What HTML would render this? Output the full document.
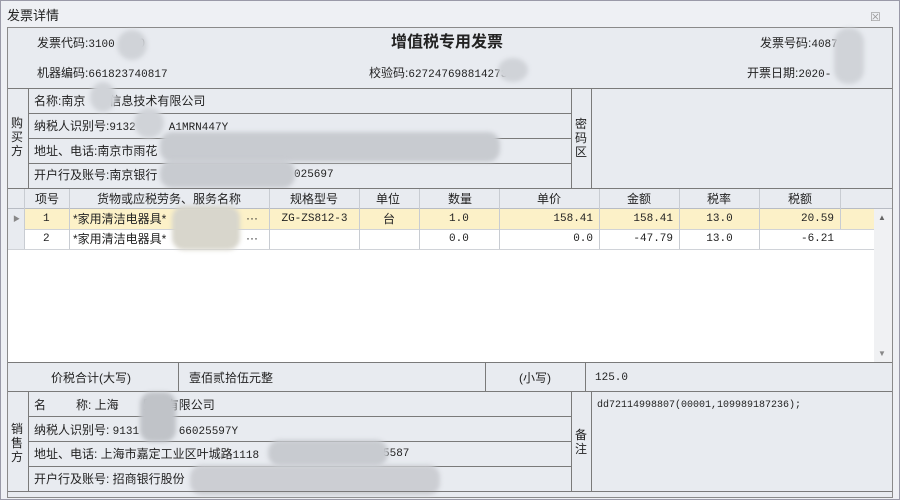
<!DOCTYPE html>
<html><head><meta charset="utf-8"><style>
*{margin:0;padding:0;box-sizing:border-box}
body{width:900px;height:500px;background:#eef0f4;font-family:"Liberation Sans","Noto Sans CJK SC","WenQuanYi Zen Hei",sans-serif;font-size:12px;color:#222;position:relative;overflow:hidden}
.a{position:absolute}
.t{position:absolute;white-space:nowrap;font-size:12px;line-height:14px}
.m{font-family:"Liberation Mono","Noto Sans CJK SC",monospace;font-size:11px}
.r{text-align:right}
.c{text-align:center}
.hl{position:absolute;height:1px;background:#7a7a7a}
.vl{position:absolute;width:1px;background:#7a7a7a}
.g{position:absolute;background:#d0d3d8;border-radius:12px;filter:blur(2px)}
</style></head><body>
<div class="a" style="left:0;top:0;width:900px;height:500px;border:1px solid #9a9aa8"></div>
<div class="t" style="left:7px;top:9px;font-size:13px">发票详情</div>
<div class="t" style="left:870px;top:10px;color:#999">☒</div>
<div class="a" style="left:7px;top:27px;width:886px;height:471px;background:#e8ebf0;border:1px solid #8a8a8a"></div>
<!-- header -->
<div class="t" style="left:37px;top:36px">发票代码:<span class="m">3100</span><span style="color:#888">&nbsp;&nbsp;&nbsp;&nbsp;&nbsp;&nbsp;&nbsp;</span>0</div>
<div class="g" style="left:117px;top:30px;width:30px;height:30px;border-radius:50%"></div>
<div class="t" style="left:391px;top:34px;font-size:16px;font-weight:bold;line-height:18px">增值税专用发票</div>
<div class="t" style="left:760px;top:36px">发票号码:<span class="m">4087</span></div>
<div class="g" style="left:834px;top:28px;width:30px;height:56px;border-radius:14px"></div>
<div class="t" style="left:37px;top:66px">机器编码:<span class="m">661823740817</span></div>
<div class="t" style="left:369px;top:66px">校验码:<span class="m">627247698814273</span></div>
<div class="g" style="left:498px;top:58px;width:30px;height:24px;border-radius:50%"></div>
<div class="t" style="left:747px;top:66px">开票日期:<span class="m">2020-</span></div>
<!-- buyer -->
<div class="hl" style="left:8px;top:88px;width:884px"></div>
<div class="vl" style="left:28px;top:88px;height:100px"></div>
<div class="t" style="left:11px;top:116px;line-height:14px;width:12px;white-space:normal">购买方</div>
<div class="hl" style="left:29px;top:113px;width:542px"></div>
<div class="hl" style="left:29px;top:138px;width:542px"></div>
<div class="hl" style="left:29px;top:163px;width:542px"></div>
<div class="vl" style="left:571px;top:88px;height:100px"></div>
<div class="vl" style="left:591px;top:88px;height:100px"></div>
<div class="t" style="left:575px;top:117px;width:12px;white-space:normal">密码区</div>
<div class="t" style="left:34px;top:94px">名称:南京<span style="color:transparent">xxxx</span>信息技术有限公司</div>
<div class="t" style="left:34px;top:119px">纳税人识别号:<span class="m">9132<span style="color:transparent">xxxxx</span>A1MRN447Y</span></div>
<div class="t" style="left:34px;top:144px">地址、电话:南京市雨花</div>
<div class="t" style="left:34px;top:168px">开户行及账号:南京银行</div>
<div class="t m" style="left:294px;top:168px">025697</div>
<div class="g" style="left:90px;top:82px;width:26px;height:30px;border-radius:50%"></div>
<div class="g" style="left:134px;top:108px;width:30px;height:30px;border-radius:50%"></div>
<div class="g" style="left:160px;top:132px;width:340px;height:30px;background:#c8cbd0"></div>
<div class="g" style="left:160px;top:160px;width:135px;height:28px;background:#c8cbd0"></div>
<!-- table -->
<div class="a" style="left:8px;top:188px;width:884px;height:174px;background:#fff;border-top:1px solid #7a7a7a"></div>
<div class="a" style="left:8px;top:189px;width:884px;height:20px;background:#e8ebf0;border-bottom:1px solid #b8bcc4"></div>
<div class="a" style="left:8px;top:209px;width:17px;height:40px;background:#e8ebf0"></div>
<div class="a" style="left:25px;top:209px;width:849px;height:20px;background:#fcf1c8"></div>
<div class="hl" style="left:25px;top:229px;width:849px;background:#d0d3d8"></div>
<div class="hl" style="left:8px;top:249px;width:866px;background:#d0d3d8"></div>
<div class="a" style="left:874px;top:209px;width:18px;height:153px;background:#f0f1f3"></div>
<div class="t" style="left:878px;top:211px;font-size:8px;color:#666">▲</div>
<div class="t" style="left:878px;top:347px;font-size:8px;color:#888">▼</div>
<div class="vl" style="left:24px;top:189px;height:60px;background:#c8ccd2"></div>
<div class="vl" style="left:69px;top:189px;height:60px;background:#c8ccd2"></div>
<div class="vl" style="left:269px;top:189px;height:60px;background:#c8ccd2"></div>
<div class="vl" style="left:359px;top:189px;height:60px;background:#c8ccd2"></div>
<div class="vl" style="left:419px;top:189px;height:60px;background:#c8ccd2"></div>
<div class="vl" style="left:499px;top:189px;height:60px;background:#c8ccd2"></div>
<div class="vl" style="left:599px;top:189px;height:60px;background:#c8ccd2"></div>
<div class="vl" style="left:679px;top:189px;height:60px;background:#c8ccd2"></div>
<div class="vl" style="left:759px;top:189px;height:60px;background:#c8ccd2"></div>
<div class="vl" style="left:840px;top:189px;height:40px;background:#c8ccd2"></div>
<div class="t" style="left:35px;top:192px">项号</div>
<div class="t" style="left:97px;top:192px">货物或应税劳务、服务名称</div>
<div class="t" style="left:290px;top:192px">规格型号</div>
<div class="t" style="left:376px;top:192px">单位</div>
<div class="t" style="left:448px;top:192px">数量</div>
<div class="t" style="left:537px;top:192px">单价</div>
<div class="t" style="left:627px;top:192px">金额</div>
<div class="t" style="left:707px;top:192px">税率</div>
<div class="t" style="left:788px;top:192px">税额</div>
<div class="t" style="left:13px;top:213px;font-size:7px;color:#888">▶</div>
<div class="t m" style="left:43px;top:212px">1</div>
<div class="t" style="left:73px;top:212px">*家用清洁电器具*</div>
<div class="t" style="left:246px;top:211px">···</div>
<div class="t m c" style="left:270px;top:212px;width:89px">ZG-ZS812-3</div>
<div class="t" style="left:383px;top:212px">台</div>
<div class="t m" style="left:449px;top:212px">1.0</div>
<div class="t m r" style="left:500px;top:212px;width:93px">158.41</div>
<div class="t m r" style="left:600px;top:212px;width:73px">158.41</div>
<div class="t m c" style="left:680px;top:212px;width:79px">13.0</div>
<div class="t m r" style="left:760px;top:212px;width:74px">20.59</div>
<div class="t m" style="left:43px;top:232px">2</div>
<div class="t" style="left:73px;top:232px">*家用清洁电器具*</div>
<div class="t" style="left:246px;top:231px">···</div>
<div class="t m" style="left:449px;top:232px">0.0</div>
<div class="t m r" style="left:500px;top:232px;width:93px">0.0</div>
<div class="t m r" style="left:600px;top:232px;width:73px">-47.79</div>
<div class="t m c" style="left:680px;top:232px;width:79px">13.0</div>
<div class="t m r" style="left:760px;top:232px;width:74px">-6.21</div>
<div class="g" style="left:172px;top:206px;width:68px;height:44px;background:#d8d6cc"></div>
<!-- total -->
<div class="hl" style="left:8px;top:362px;width:884px"></div>
<div class="hl" style="left:8px;top:391px;width:884px"></div>
<div class="vl" style="left:178px;top:362px;height:29px"></div>
<div class="vl" style="left:485px;top:362px;height:29px"></div>
<div class="vl" style="left:585px;top:362px;height:29px"></div>
<div class="t" style="left:51px;top:371px">价税合计(大写)</div>
<div class="t" style="left:189px;top:371px">壹佰贰拾伍元整</div>
<div class="t" style="left:519px;top:371px">(小写)</div>
<div class="t m" style="left:595px;top:371px">125.0</div>
<!-- seller -->
<div class="vl" style="left:28px;top:391px;height:100px"></div>
<div class="t" style="left:11px;top:422px;width:12px;white-space:normal">销售方</div>
<div class="hl" style="left:29px;top:416px;width:542px"></div>
<div class="hl" style="left:29px;top:441px;width:542px"></div>
<div class="hl" style="left:29px;top:466px;width:542px"></div>
<div class="vl" style="left:571px;top:391px;height:100px"></div>
<div class="vl" style="left:591px;top:391px;height:100px"></div>
<div class="t" style="left:575px;top:428px;width:12px;white-space:normal">备注</div>
<div class="t" style="left:34px;top:398px">名&nbsp;&nbsp;&nbsp;&nbsp;&nbsp;&nbsp;&nbsp;&nbsp;&nbsp;称: 上海<span style="color:transparent">xxxx</span>贸易有限公司</div>
<div class="t" style="left:34px;top:423px">纳税人识别号: <span class="m">9131<span style="color:transparent">xxxxxx</span>66025597Y</span></div>
<div class="t" style="left:34px;top:447px">地址、电话: 上海市嘉定工业区叶城路<span class="m">1118</span></div>
<div class="t m" style="left:383px;top:447px">5587</div>
<div class="t" style="left:34px;top:472px">开户行及账号: 招商银行股份</div>
<div class="t m" style="left:597px;top:399px;font-size:10px">dd72114998807(00001,109989187236);</div>
<div class="g" style="left:140px;top:392px;width:36px;height:50px;background:#c0c3c8"></div>
<div class="g" style="left:268px;top:440px;width:120px;height:26px;background:#c8cbd0"></div>
<div class="g" style="left:190px;top:465px;width:250px;height:30px;background:#ccced3"></div>
<div class="hl" style="left:8px;top:491px;width:884px"></div>
</body></html>
